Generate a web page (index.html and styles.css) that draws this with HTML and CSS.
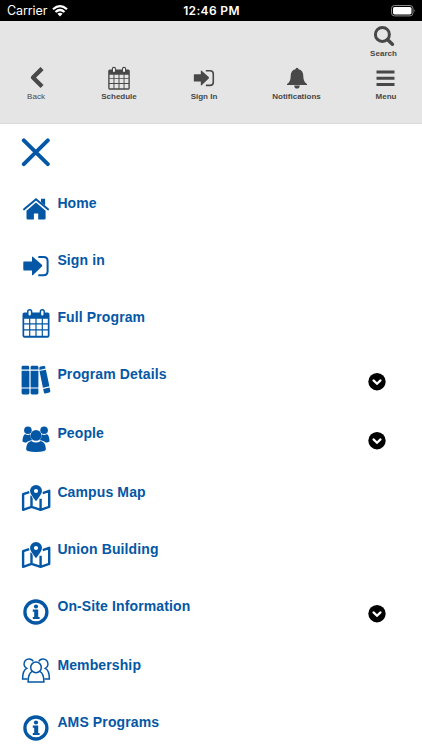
FILE: index.html
```html
<!DOCTYPE html>
<html lang="en">
<head>
<meta charset="utf-8">
<meta name="viewport" content="width=device-width, initial-scale=1">
<title>Menu</title>
<link rel="stylesheet" href="styles.css">
</head>
<body>
<svg class="defs" aria-hidden="true">
  <symbol id="calendar" viewBox="0 0 30 30">
    <path fill-rule="evenodd" d="M3.5 4.4H26.5Q28.5 4.4 28.5 6.4V27.5Q28.5 29.8 26.2 29.8H3.8Q1.5 29.8 1.5 27.5V6.4Q1.5 4.4 3.5 4.4ZM3.2 10.8V15.2H8.1V10.8ZM9.3 10.8V15.2H14.4V10.8ZM15.6 10.8V15.2H20.7V10.8ZM21.9 10.8V15.2H26.8V10.8ZM3.2 16.4V21.2H8.1V16.4ZM9.3 16.4V21.2H14.4V16.4ZM15.6 16.4V21.2H20.7V16.4ZM21.9 16.4V21.2H26.8V16.4ZM3.2 22.4V27.8H8.1V22.4ZM9.3 22.4V27.8H14.4V22.4ZM15.6 22.4V27.8H20.7V22.4ZM21.9 22.4V27.8H26.8V22.4Z"/>
    <g class="ring"><rect x="6.8" y="1.8" width="3.8" height="6.4" rx="1.8"/><rect x="19.4" y="1.8" width="3.8" height="6.4" rx="1.8"/></g>
  </symbol>
  <symbol id="signin" viewBox="0 0 30 30">
    <path d="M3 10.4H11V6.4Q11 5 12.1 5.9L20.9 13.8Q21.7 14.7 20.9 15.6L12.1 24Q11 24.9 11 23.4V19.5H3Q2.3 19.5 2.3 18.7V11.2Q2.3 10.4 3 10.4Z"/>
    <path class="line" stroke-width="2" d="M17.3 6H22.5Q26.6 6 26.6 10V20.2Q26.6 24.2 22.5 24.2H17.3"/>
  </symbol>
  <symbol id="map" viewBox="0 0 30 30">
    <path class="line" stroke-width="2.4" stroke-linejoin="round" d="M8.3 9.1L2.1 11.2V26.8L10.5 23.8L19.6 26.8L28.2 23.8V7.8L21.7 10.2M10.5 12.5V23.8M19.6 15.8V26.8"/>
    <path fill-rule="evenodd" stroke="#fff" stroke-width="1.2" paint-order="stroke" d="M15 2A6 6 0 0 1 21 8Q21 10.8 15 18.3Q9 10.8 9 8A6 6 0 0 1 15 2Z"/>
    <circle cx="15" cy="8" r="2.1" fill="#fff"/>
  </symbol>
  <symbol id="info" viewBox="0 0 30 30">
    <circle class="line" cx="14.9" cy="15" r="11" stroke-width="3.3"/>
    <circle cx="15" cy="9.5" r="2.1"/>
    <path d="M11.8 12.6H17.2V20H18.6V22.1H11.8V20H13.2V14.8H11.8Z"/>
  </symbol>
  <symbol id="chevron" viewBox="0 0 18 18">
    <circle cx="9" cy="8.7" r="8.7"/>
    <path d="M5.5 7.4L9 10.8L12.5 7.4" fill="none" stroke="#fff" stroke-width="2.2" stroke-linecap="round"/>
  </symbol>
</svg>

<div class="status">
  <div class="carrier">Carrier
    <svg width="16" height="12" viewBox="0 0 16 12"><g fill="none" stroke="#fff" stroke-width="2.2"><path d="M1 4.3Q8-2 15 4.3"/><path d="M3.5 7Q8 3 12.5 7"/></g><path d="M8 11.4L5.4 8.8Q8 6.8 10.6 8.8Z" fill="#fff"/></svg>
  </div>
  <div class="time">12:46 PM</div>
  <svg class="battery" width="26" height="12" viewBox="0 0 26 12"><rect x=".5" y=".5" width="21.5" height="10.4" rx="3" fill="none" stroke="#8a8a8a"/><rect x="2" y="2" width="18.5" height="7.4" rx="1.6" fill="#fff"/><path d="M23.3 4Q24.7 5.7 23.3 7.4Z" fill="#8a8a8a"/></svg>
</div>

<header class="header">
  <div class="search-row">
    <a class="tool">
      <svg viewBox="0 0 24 24"><circle class="line" cx="10.4" cy="10.4" r="7" stroke-width="3"/><path class="line" d="M15.7 15.7L20.4 20.2" stroke-width="3.5" stroke-linecap="round"/></svg>
      <span>Search</span>
    </a>
  </div>
  <nav class="tools">
    <a class="tool back"><svg viewBox="0 0 24 24"><path class="line" d="M16.5 4.1L9 11.5L16.5 18.9" stroke-width="4.3" stroke-linecap="square" stroke-linejoin="round"/></svg><span>Back</span></a>
    <a class="tool"><svg viewBox="0 0 30 30"><use href="#calendar"/></svg><span>Schedule</span></a>
    <a class="tool"><svg viewBox="0 0 30 30"><use href="#signin"/></svg><span>Sign In</span></a>
    <a class="tool"><svg viewBox="0 0 24 24"><path d="M12 1.7Q13.5 1.7 13.5 3.2Q18.3 4.4 18.3 10Q18.3 15.7 22 18.1V18.9H2V18.1Q5.7 15.7 5.7 10Q5.7 4.4 10.5 3.2Q10.5 1.7 12 1.7ZM9.2 19.4H14.8Q14.5 22.6 12 22.6Q9.5 22.6 9.2 19.4Z"/></svg><span>Notifications</span></a>
    <a class="tool"><svg viewBox="0 0 24 24"><path d="M2.5 4.4H20.5V7.4H2.5ZM2.5 10.7H20.5V13.7H2.5ZM2.5 17H20.5V20H2.5Z"/></svg><span>Menu</span></a>
  </nav>
</header>

<main class="menu">
  <svg class="close" viewBox="0 0 30 30"><path class="line" d="M2.8 2.4L26.8 26.2M26.8 2.4L2.8 26.2" stroke-width="3.9" stroke-linecap="round"/></svg>
  <ul class="list">
    <li><svg class="icon" viewBox="0 0 30 30"><path d="M15 8.6L24.6 16.8V24.2Q24.6 25.4 23.4 25.4H17.2V19.4H12.9V25.4H6.7Q5.5 25.4 5.5 24.2V16.8ZM20 4.7H24.1V11.4L20 8.2Z"/><path class="line" stroke-width="2.1" stroke-linecap="round" d="M3.1 15.3L15 5.3L27 15.3"/></svg><span>Home</span></li>
    <li><svg class="icon"><use href="#signin"/></svg><span>Sign in</span></li>
    <li><svg class="icon"><use href="#calendar"/></svg><span>Full Program</span></li>
    <li class="group"><svg class="icon" viewBox="0 0 30 30"><path d="M2 .8H6.8Q8.2 .8 8.2 2.2V4.6H.6V2.2Q.6 .8 2 .8ZM.6 5.7H8.4V22.4H.6ZM.6 23.5H8.4V28Q8.4 29.4 7 29.4H2Q.6 29.4 .6 28ZM11 .8H15.8Q17.4 .8 17.4 2.2V4.6H9.6V2.2Q9.6 .8 11 .8ZM9.6 5.7H17.4V22.4H9.6ZM9.6 23.5H17.4V28Q17.4 29.4 16 29.4H11Q9.6 29.4 9.6 28ZM18.4 4.9V2.9Q18.3 1.8 19.5 1.6L22.5 .9Q23.8 .7 24.1 1.8L24.6 3.6ZM18.5 6.1L24.9 4.7L28.4 21.3L21.9 22.8ZM22.2 23.9L28.6 22.4L29.3 25.9Q29.5 27.1 28.3 27.5L24.4 28.5Q23.2 28.7 22.9 27.5Z"/></svg><span>Program Details</span><svg class="chevron"><use href="#chevron"/></svg></li>
    <li class="group"><svg class="icon" viewBox="0 0 30 30"><circle cx="6.9" cy="6.2" r="3.8"/><circle cx="23.1" cy="6.2" r="3.8"/><path d="M4 9.9Q6.7 11.8 9.3 10.2Q9.3 14 11.4 16.2Q6.5 16.8 5.4 18.6Q1.5 18.3 1.5 16.9Q1.5 12 4 9.9ZM26 9.9Q23.3 11.8 20.7 10.2Q20.7 14 18.6 16.2Q23.5 16.8 24.6 18.6Q28.5 18.3 28.5 16.9Q28.5 12 26 9.9Z"/><circle cx="15" cy="11.4" r="5.4"/><path d="M10.2 17Q15 20 19.8 17Q24.8 18.6 24.9 25.2Q24.8 27.9 15 27.9Q5.2 27.9 5.1 25.2Q5.2 18.6 10.2 17Z"/></svg><span>People</span><svg class="chevron"><use href="#chevron"/></svg></li>
    <li><svg class="icon"><use href="#map"/></svg><span>Campus Map</span></li>
    <li><svg class="icon"><use href="#map"/></svg><span>Union Building</span></li>
    <li class="group"><svg class="icon"><use href="#info"/></svg><span>On-Site Information</span><svg class="chevron"><use href="#chevron"/></svg></li>
    <li><svg class="icon" viewBox="0 0 30 30"><g class="line" stroke-width="1.5"><path d="M12.3 5.4A5 5 0 1 0 5.7 12.4Q1.7 14.1 1.6 23.1H6.6M17.7 5.4A5 5 0 1 1 24.3 12.4Q28.3 14.1 28.4 23.1H23.4"/><circle cx="15" cy="11.4" r="5.3"/><path d="M11.3 15.4Q7.1 17.3 7.1 26H22.9Q22.9 17.3 18.7 15.4"/></g></svg><span>Membership</span></li>
    <li><svg class="icon"><use href="#info"/></svg><span>AMS Programs</span></li>
  </ul>
</main>
</body>
</html>
```
FILE: styles.css
```css
* { box-sizing: border-box; }
html, body { margin: 0; height: 750px; overflow: hidden; }
body {
  background: #fff;
  font-family: "Liberation Sans", Arial, sans-serif;
}
svg { display: block; flex: none; fill: currentColor; }
.defs { display: none; }
.line { fill: none; stroke: currentColor; }
.ring { fill: #fff; stroke: currentColor; stroke-width: 1.5; }

.status {
  display: grid;
  grid-template-columns: 1fr auto 1fr;
  align-items: center;
  height: 21px;
  padding: 1px 6px 0 7px;
  background: #000;
  color: #fff;
  font: 12.5px/20px Inter, sans-serif;
}
.carrier { display: flex; align-items: center; gap: 5px; letter-spacing: -.1px; }
.time { font-weight: 600; font-size: 12px; letter-spacing: .35px; }
.carrier { letter-spacing: -.1px; }
.battery { justify-self: end; margin-right: -1px; }

.header {
  height: 103px;
  padding-top: 3px;
  background: #e5e5e5;
  border-bottom: 1px solid #dadada;
  color: #484848;
}
.search-row { display: flex; justify-content: flex-end; height: 42px; padding-right: 25px; }
.tools { display: grid; grid-template-columns: 72px 94px 76px 109px 70px; }
.tool {
  display: flex;
  flex-direction: column;
  align-items: center;
  font-size: 8px;
  font-weight: 700;
  line-height: 10px;
}
.search-row .tool { gap: 1px; letter-spacing: .05px; }
.tool svg { width: 24px; height: 24px; }
.tools .tool { gap: 2px; }
.tool .ring { fill: #e5e5e5; }
.back { font-weight: 400; }

.menu { padding: 14px 36px 0 21px; color: #0457a5; }
.close { width: 30px; height: 30px; }
.list { margin: 26px 0 0; padding: 0; list-style: none; }
.list li {
  display: flex;
  align-items: flex-start;
  gap: 6.4px;
  height: 57px;
  font-size: 14px;
  font-weight: 700;
  line-height: 18px;
  letter-spacing: .12px;
}
.list .group { height: 59px; }
.icon { width: 30px; height: 30px; }
.chevron { width: 18px; height: 18px; margin: 8px 0 0 auto; color: #000; }
```
